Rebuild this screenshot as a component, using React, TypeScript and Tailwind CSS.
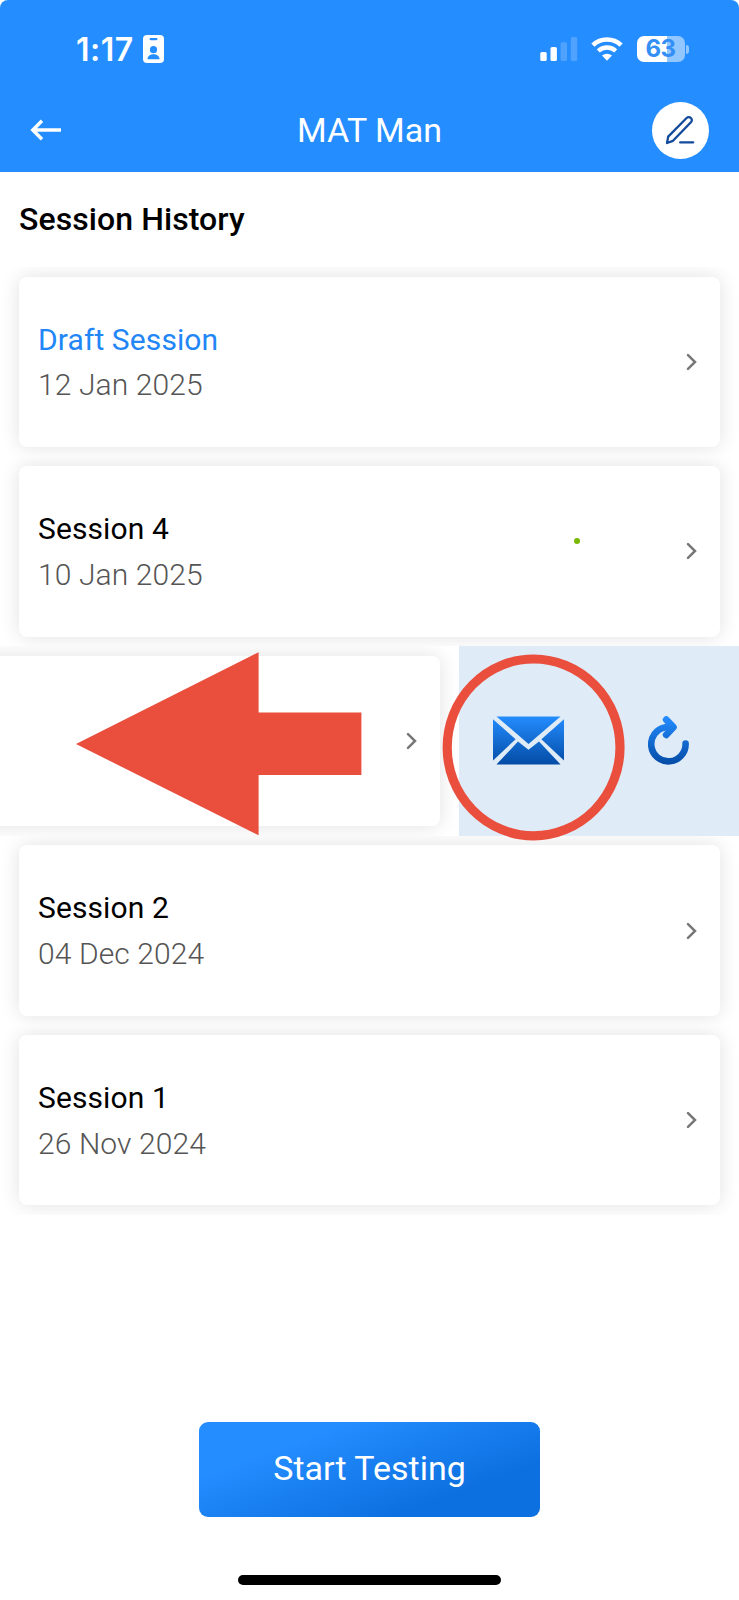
import React from 'react';

interface Session {
  id: string;
  title: string;
  date: string;
  draft?: boolean;
  marked?: boolean;
  swiped?: boolean;
}

const sessions: Session[] = [
  { id: 'draft', title: 'Draft Session', date: '12 Jan 2025', draft: true },
  { id: '4', title: 'Session 4', date: '10 Jan 2025', marked: true },
  { id: '3', title: 'Session 3', date: '', swiped: true },
  { id: '2', title: 'Session 2', date: '04 Dec 2024' },
  { id: '1', title: 'Session 1', date: '26 Nov 2024' },
];

function StatusBar() {
  return (
    <div className="flex h-[98px] items-center justify-between pl-[76px] pr-[50px]">
      <div className="flex items-center">
        <span className="w-[67px] pt-[1px] font-['Inter',sans-serif] text-[32px] font-semibold leading-none tracking-[0.5px]">
          1:17
        </span>
        <svg width="21" height="28" viewBox="0 0 21 28">
          <rect width="21" height="28" rx="4" fill="#fff" />
          <rect x="6.5" y="3" width="8" height="2.2" rx="1.1" fill="#248dff" />
          <circle cx="10.5" cy="14.7" r="3.6" fill="#248dff" />
          <path d="M4.5 24.3c0-3.4 2.8-5 6-5s6 1.6 6 5z" fill="#248dff" />
        </svg>
      </div>

      <div className="flex items-center">
        <svg width="38" height="26" viewBox="0 0 38 26" fill="#fff">
          <rect x="0.3" y="16" width="6.4" height="9" rx="1.6" />
          <rect x="10.5" y="11" width="6.4" height="14" rx="1.6" />
          <rect x="20.6" y="6.3" width="6.4" height="18.7" rx="1.6" opacity="0.2" />
          <rect x="30.8" y="1" width="6.4" height="24" rx="1.6" opacity="0.2" />
        </svg>
        <svg className="ml-[13px]" width="32" height="26" viewBox="0 0 32 26" fill="none">
          <path d="M1.9 9.2a20.2 20.2 0 0 1 28.2 0" stroke="#fff" strokeWidth="4.6" />
          <path d="M7.3 15a12.6 12.6 0 0 1 17.4 0" stroke="#fff" strokeWidth="4.4" />
          <path d="M16 24.8l-5-5.2a7.4 7.4 0 0 1 10 0z" fill="#fff" />
        </svg>
        <div className="ml-[14px] flex items-center">
          <div className="flex h-[26px] w-[48px] items-center justify-center rounded-[7px] bg-[linear-gradient(90deg,#fff_62.5%,#91c6ff_62.5%)] font-['Inter',sans-serif] text-[24px] font-bold leading-none tracking-[-0.5px] text-[#338ff6]">
            63
          </div>
          <div className="ml-[1.5px] h-[9px] w-[3px] rounded-r-full bg-[#91c6ff]" />
        </div>
      </div>
    </div>
  );
}

function Header() {
  return (
    <header className="h-[172px] rounded-t-[8px] bg-[#248dff] text-white">
      <StatusBar />
      <div className="flex h-[64px] items-center justify-between px-[30px]">
        <button className="w-[57px]">
          <svg width="32" height="22" viewBox="0 0 32 22" fill="none" stroke="#fff" strokeWidth="3.4">
            <path d="M31 11H3M12 1.8L2.8 11l9.2 9.2" />
          </svg>
        </button>
        <h1 className="text-[34px] leading-none">MAT Man</h1>
        <button className="flex h-[57px] w-[57px] items-center justify-center rounded-full bg-white">
          <svg className="-translate-x-px" width="30" height="30" viewBox="0 0 30 30" fill="none" stroke="#134a9c" strokeWidth="2.3" strokeLinecap="round" strokeLinejoin="round">
            <path d="M2 28l1.2-6.4L21.6 3a3 3 0 0 1 4.3 0 3 3 0 0 1 0 4.3L8 25.8z" />
            <path d="M15.2 27.4h13" />
          </svg>
        </button>
      </div>
    </header>
  );
}

function MailIcon() {
  return (
    <svg width="71" height="49" viewBox="0 0 71 49">
      <defs>
        <linearGradient id="mail" x1="0" y1="0" x2="0" y2="49" gradientUnits="userSpaceOnUse">
          <stop stopColor="#248dff" />
          <stop offset="1" stopColor="#034ba5" />
        </linearGradient>
      </defs>
      <g fill="url(#mail)">
        <path d="M3.5 0.4h64L35.5 28z" />
        <path d="M0 3.2l22.6 20L0 44.5z" />
        <path d="M71 3.2V44.5L48.4 23.2z" />
        <path d="M25 25.5l10.5 8.2L46 25.5l21.5 22.9h-64z" />
      </g>
    </svg>
  );
}

function RetryIcon() {
  return (
    <svg width="42" height="49" viewBox="0 0 42 49" fill="none">
      <defs>
        <linearGradient id="retry" x1="0" y1="0" x2="0" y2="49" gradientUnits="userSpaceOnUse">
          <stop stopColor="#248dff" />
          <stop offset="1" stopColor="#034ba5" />
        </linearGradient>
      </defs>
      <g stroke="url(#retry)" strokeLinecap="round" strokeLinejoin="round">
        <path d="M37.6 27.6A17.2 17.2 0 1 1 17.5 11.2" strokeWidth="6.6" />
        <path d="M18.2 3.6l7.2 7.6-7.2 7.6" strokeWidth="6.8" fill="url(#retry)" />
      </g>
    </svg>
  );
}

function Chevron() {
  return (
    <svg width="11" height="18" viewBox="0 0 11 18" fill="none" stroke="#777" strokeWidth="2.5" strokeLinecap="round">
      <path d="M2 2.2L9 9l-7 6.8" />
    </svg>
  );
}

function SessionRow({ session }: { session: Session }) {
  return (
    <div
      className={`relative flex h-[189.6px] overflow-hidden py-[9.5px] ${
        session.swiped ? 'justify-end' : 'px-[19px]'
      }`}
    >
      <div
        className={`flex shrink-0 items-center justify-between rounded-[8px] bg-white pl-[19px] pr-[23px] shadow-[0_0_20px_rgba(0,0,0,0.12)] ${
          session.swiped ? 'mr-[19px] w-[701px]' : 'w-full'
        }`}
      >
        <div className="pt-[1px]">
          <p
            className={`text-[30px] leading-[45.6px] tracking-[0.1px] ${
              session.draft ? 'text-[#2286f7]' : 'text-black'
            }`}
          >
            {session.swiped ? '' : session.title}
          </p>
          <p className="text-[30px] font-light leading-[45.6px] tracking-[0.1px] text-[#555]">
            {session.date}
          </p>
        </div>
        <Chevron />
      </div>

      {session.marked && (
        <span className="absolute left-[574px] top-[81px] h-[6px] w-[6px] rounded-full bg-[#7ab800]" />
      )}

      {session.swiped && (
        <div className="-my-[9.5px] flex w-[280.5px] shrink-0 items-center justify-between bg-[#dfebf7] pb-[1px] pl-[34.5px] pr-[49.5px]">
          <button>
            <MailIcon />
          </button>
          <button>
            <RetryIcon />
          </button>
        </div>
      )}
    </div>
  );
}

// Swipe hint drawn over the session list
function SwipeHint() {
  return (
    <svg
      className="pointer-events-none absolute left-0 top-[379px]"
      width="739"
      height="200"
      viewBox="0 646 739 200"
    >
      <path d="M76 744l182.6-91.7v60.2h102.8V775H258.6v60.3z" fill="#ea4e3d" />
      <ellipse cx="533.6" cy="747.4" rx="86.4" ry="88.4" fill="none" stroke="#ea4e3d" strokeWidth="9.2" />
    </svg>
  );
}

export default function App() {
  return (
    <div className="flex h-[1600px] w-[739px] flex-col overflow-hidden bg-white font-['Roboto',sans-serif]">
      <Header />

      <h2 className="flex h-[95px] items-center px-[19px] pb-[1px] text-[32px] font-medium tracking-[0.08px] text-black">
        Session History
      </h2>

      <div className="relative">
        {sessions.map((session) => (
          <SessionRow key={session.id} session={session} />
        ))}
        <SwipeHint />
      </div>

      <div className="mt-auto flex flex-col items-center pb-[15px]">
        <button className="mb-[58.5px] h-[94.5px] w-[341px] rounded-[9px] bg-[linear-gradient(160deg,#248dff_25%,#0d70e0_75%)] pb-[1px] text-[34px] text-white">
          Start Testing
        </button>
        <div className="h-[10px] w-[263px] rounded-full bg-black" />
      </div>
    </div>
  );
}
